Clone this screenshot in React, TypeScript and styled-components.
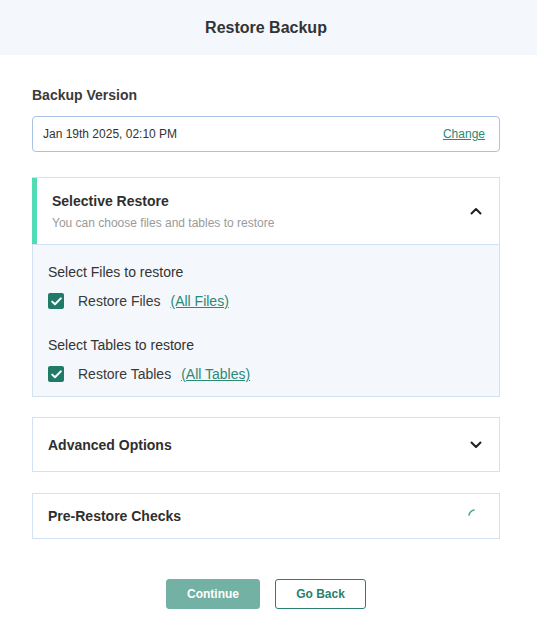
import React from "react";
import styled, { createGlobalStyle } from "styled-components";

const Global = createGlobalStyle`
  html, body { margin: 0; padding: 0; background: #fff; }
  body { font-family: "Liberation Sans", Arial, sans-serif; color: #333; }
  * { box-sizing: border-box; }
`;

const Page = styled.div`
  width: 537px;
  min-height: 622px;
  background: #fff;
`;

const Header = styled.header`
  height: 55px;
  background: #f4f7fb;
  display: flex;
  align-items: center;
  justify-content: center;
  padding-right: 5px;
  font-size: 16px;
  font-weight: 700;
  color: #333;
`;

const Body = styled.div`
  padding: 32px 37px 0 32px;
  display: flex;
  flex-direction: column;
`;

const Label = styled.div`
  font-size: 14px;
  font-weight: 700;
  color: #3a3a3a;
  line-height: 16px;
  margin-bottom: 13px;
`;

const VersionBox = styled.div`
  height: 36px;
  border: 1px solid #a9c3e6;
  border-radius: 4px;
  display: flex;
  align-items: center;
  justify-content: space-between;
  padding: 0 14px 0 10px;
  font-size: 12px;
  color: #333;
`;

const Link = styled.a<{ $size?: number }>`
  color: #2a8a75;
  text-decoration: underline;
  font-size: ${(p) => p.$size ?? 12}px;
  cursor: pointer;
`;

const Card = styled.section<{ $mt: number }>`
  margin-top: ${(p) => p.$mt}px;
  border: 1px solid #d2e2f4;
  background: #fff;
`;

const CardHead = styled.div<{ $accent?: boolean; $h: number }>`
  height: ${(p) => p.$h}px;
  display: flex;
  align-items: center;
  justify-content: space-between;
  padding: 0 17px 0 15px;
  border-left: ${(p) => (p.$accent ? "5px solid #52dcb5" : "none")};
  margin-left: ${(p) => (p.$accent ? "-1px" : "0")};
`;

const HeadText = styled.div`
  display: flex;
  flex-direction: column;
  gap: 7px;
`;

const CardTitle = styled.div`
  font-size: 14px;
  font-weight: 700;
  color: #2f2f2f;
  line-height: 16px;
`;

const CardSub = styled.div`
  font-size: 12px;
  color: #9a9a9a;
  line-height: 14px;
`;

const CardBody = styled.div`
  background: #f4f7fc;
  border-top: 1px solid #d2e2f4;
  padding: 19px 15px 14px;
  display: flex;
  flex-direction: column;
`;

const GroupLabel = styled.div<{ $mt?: number }>`
  font-size: 14px;
  color: #333;
  line-height: 16px;
  margin-top: ${(p) => p.$mt ?? 0}px;
`;

const CheckRow = styled.div`
  display: flex;
  align-items: center;
  margin-top: 13px;
  font-size: 14px;
  color: #3a3a3a;
  line-height: 16px;
`;

const Box = styled.span`
  width: 16px;
  height: 16px;
  border-radius: 2px;
  background: #1f7b68;
  display: inline-flex;
  align-items: center;
  justify-content: center;
  margin-right: 14px;
`;

const RowText = styled.span`
  margin-right: 10px;
`;

const Chevron = styled.svg`
  width: 12px;
  height: 8px;
  display: block;
`;

const Spinner = styled.svg`
  width: 14px;
  height: 14px;
  display: block;
  margin-right: 2px;
  margin-top: -8px;
`;

const Actions = styled.div`
  display: flex;
  justify-content: center;
  gap: 15px;
  margin-top: 40px;
`;

const Button = styled.button<{ $primary?: boolean }>`
  height: 30px;
  width: ${(p) => (p.$primary ? 94 : 91)}px;
  border-radius: 3px;
  font-family: "Liberation Sans", Arial, sans-serif;
  font-size: 12px;
  font-weight: 700;
  cursor: pointer;
  border: 1px solid ${(p) => (p.$primary ? "#72b1a3" : "#2a7f6e")};
  background: ${(p) => (p.$primary ? "#72b1a3" : "#fff")};
  color: ${(p) => (p.$primary ? "#fff" : "#2a7f6e")};
`;

const Check = () => (
  <Box>
    <svg width="11" height="9" viewBox="0 0 11 9">
      <path d="M1.2 4.6 L4 7.3 L9.8 1.4" fill="none" stroke="#fff" strokeWidth="2" strokeLinecap="round" strokeLinejoin="round" />
    </svg>
  </Box>
);

const ChevronIcon = ({ up }: { up?: boolean }) => (
  <Chevron viewBox="0 0 12 8">
    <path
      d={up ? "M1.5 6.5 L6 2 L10.5 6.5" : "M1.5 1.5 L6 6 L10.5 1.5"}
      fill="none"
      stroke="#222"
      strokeWidth="2"
      strokeLinecap="round"
      strokeLinejoin="round"
    />
  </Chevron>
);

export default function App() {
  return (
    <Page>
      <Global />
      <Header>Restore Backup</Header>
      <Body>
        <Label>Backup Version</Label>
        <VersionBox>
          <span>Jan 19th 2025, 02:10 PM</span>
          <Link>Change</Link>
        </VersionBox>

        <Card $mt={25}>
          <CardHead $accent $h={66}>
            <HeadText>
              <CardTitle>Selective Restore</CardTitle>
              <CardSub>You can choose files and tables to restore</CardSub>
            </HeadText>
            <ChevronIcon up />
          </CardHead>
          <CardBody>
            <GroupLabel>Select Files to restore</GroupLabel>
            <CheckRow>
              <Check />
              <RowText>Restore Files</RowText>
              <Link $size={14}>(All Files)</Link>
            </CheckRow>
            <GroupLabel $mt={28}>Select Tables to restore</GroupLabel>
            <CheckRow>
              <Check />
              <RowText>Restore Tables</RowText>
              <Link $size={14}>(All Tables)</Link>
            </CheckRow>
          </CardBody>
        </Card>

        <Card $mt={20}>
          <CardHead $h={53}>
            <CardTitle>Advanced Options</CardTitle>
            <ChevronIcon />
          </CardHead>
        </Card>

        <Card $mt={21}>
          <CardHead $h={44}>
            <CardTitle>Pre-Restore Checks</CardTitle>
            <Spinner viewBox="0 0 14 14">
              <path d="M3 10 A7 7 0 0 1 8 5" fill="none" stroke="#4aa88f" strokeWidth="1.6" strokeLinecap="round" />
            </Spinner>
          </CardHead>
        </Card>

        <Actions>
          <Button $primary>Continue</Button>
          <Button>Go Back</Button>
        </Actions>
      </Body>
    </Page>
  );
}
